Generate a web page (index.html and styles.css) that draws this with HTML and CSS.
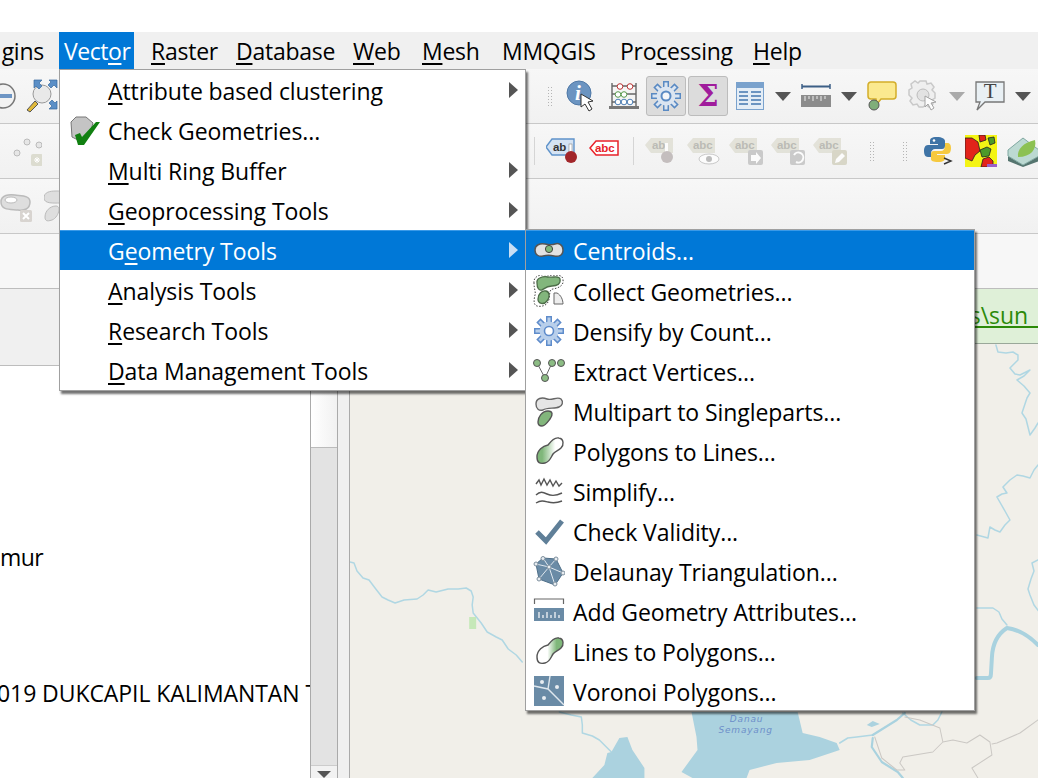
FILE: index.html
```html
<!DOCTYPE html>
<html lang="en">
<head>
<meta charset="utf-8">
<title>QGIS Vector menu</title>
<link rel="stylesheet" href="styles.css">
</head>
<body>
<div class="app">
  <div class="titlegap"></div>
  <nav class="menubar">
    <span class="mb clip">gins</span>
    <span class="mb on">Vect<u>o</u>r</span>
    <span class="mb"><u>R</u>aster</span>
    <span class="mb"><u>D</u>atabase</span>
    <span class="mb"><u>W</u>eb</span>
    <span class="mb"><u>M</u>esh</span>
    <span class="mb">MMQGIS</span>
    <span class="mb">Pro<u>c</u>essing</span>
    <span class="mb"><u>H</u>elp</span>
  </nav>

  <div class="toolbar">
    <div class="tb-left one">
      <span class="slot"><svg width="32" height="32" viewBox="0 0 32 32"><circle cx="19" cy="16" r="12" fill="#f2f2f2" stroke="#777" stroke-width="1.5"/><rect x="10" y="14" width="18" height="4" fill="#6d95c4"/></svg></span>
      <span class="slot"><svg width="34" height="34" viewBox="0 0 34 34"><circle cx="17" cy="15" r="9" fill="#e9e9e9" stroke="#999"/><path d="M9 1h8l-3 3 3 3-3 3-3-3-2 2zM32 1v8l-3-3-3 3-3-3 3-3-2-2zM32 30h-8l3-3-3-3 3-3 3 3 2-2z" fill="#5b8fc7" stroke="#37699f" stroke-width=".7"/><path d="M2 31l8-9 3 3-8 8z" fill="#e0b93a" stroke="#555"/></svg></span>
      <span class="grip g1"></span>
    </div>
    <span class="slot"><svg width="32" height="32" viewBox="0 0 32 32"><circle cx="13" cy="13" r="12" fill="#6b94c1" stroke="#4f78a6"/><text x="9" y="20" class="i-info">i</text><path d="M15 14l0 13 4-3 4 7 3-2-4-7 5-1z" fill="#fff" stroke="#333"/></svg></span>
    <span class="slot"><svg width="30" height="28" viewBox="0 0 30 28"><g fill="none" stroke="#666" stroke-width="1.4"><path d="M3 1v23M27 1v23M3 4h24M3 12h24M3 20h24"/></g><circle cx="11" cy="4.500" r="2.800" fill="#fff" stroke="#b33"/><circle cx="21" cy="4.500" r="2.800" fill="#fff" stroke="#b33"/><circle cx="9" cy="12.500" r="2.800" fill="#fff" stroke="#5a9b4f"/><circle cx="15" cy="12.500" r="2.800" fill="#fff" stroke="#5a9b4f"/><circle cx="9" cy="20" r="2.800" fill="#fff" stroke="#4d7fb5"/><circle cx="15" cy="20" r="2.800" fill="#fff" stroke="#4d7fb5"/><circle cx="21" cy="20" r="2.800" fill="#fff" stroke="#4d7fb5"/><rect x="0" y="24" width="30" height="3" fill="#777"/></svg></span>
    <span class="slot btn"><svg width="32" height="32" viewBox="0 0 32 32"><g stroke="#5a8ac3" stroke-width="6"><path d="M16 1v30M1 16h30M5.400 5.400l21.200 21.200M26.600 5.400L5.400 26.600"/></g><g stroke="#dbe5f1" stroke-width="3"><path d="M16 2.500v27M2.500 16h27M6.500 6.500l19 19M25.500 6.500l-19 19"/></g><circle cx="16" cy="16" r="9.500" fill="#dbe5f1"/><circle cx="16" cy="16" r="4.500" fill="#f4f6f9" stroke="#5a8ac3" stroke-width="2"/></svg></span>
    <span class="slot btn"><svg width="30" height="30" viewBox="0 0 30 30"><text x="15" y="25" class="i-sigma">Σ</text></svg></span>
    <span class="slot"><svg width="28" height="28" viewBox="0 0 28 28"><rect x=".5" y=".5" width="27" height="27" fill="#e4edf6" stroke="#7aa2cd"/><rect x="1" y="1" width="26" height="5" fill="#7aa2cd"/><path d="M3 10h9M15 10h10M3 14h9M15 14h10M3 18h9M15 18h10M3 22h9M15 22h10" stroke="#6b94c1" stroke-width="2"/></svg></span>
    <span class="drop"></span>
    <span class="slot"><svg width="30" height="26" viewBox="0 0 30 26"><path d="M1 1v5M29 1v5" stroke="#3c5f86" stroke-width="1.5"/><rect x="1" y="2.500" width="28" height="2" fill="#3c5f86"/><rect x="0" y="12" width="30" height="12" fill="#8c8c8c"/><path d="M4 13v5M8 13v3M12 13v5M16 13v3M20 13v5M24 13v3" stroke="#eee"/></svg></span>
    <span class="drop"></span>
    <span class="slot"><svg width="30" height="30" viewBox="0 0 30 30"><path d="M4 1h22a3 3 0 0 1 3 3v11a3 3 0 0 1-3 3H14l-4 5-1-5H4a3 3 0 0 1-3-3V4a3 3 0 0 1 3-3z" fill="#fbe98f" stroke="#d3ad2a" stroke-width="1.5"/><circle cx="7" cy="24" r="5" fill="#7fae7a" stroke="#555"/></svg></span>
    <span class="slot faded"><svg width="32" height="32" viewBox="0 0 32 32"><path d="M12 1h6l1 3 4-1 3 4-2 3 3 3v5l-3 2 1 4-4 3-3-2-3 2h-4l-2-3-4 1-3-4 2-3-3-3v-5l3-2-1-4 4-3 3 2z" fill="#eee" stroke="#bbb" stroke-width="1.5"/><circle cx="15" cy="15" r="6" fill="#ddd" stroke="#aaa"/><path d="M17 16v11l3-3 3 6 3-2-3-5 5-1z" fill="#fff" stroke="#888"/></svg></span>
    <span class="drop muted"></span>
    <span class="slot"><svg width="30" height="30" viewBox="0 0 30 30"><path d="M1 1h28v20H10l-8 8 3-8H1z" fill="#e9f0f4" stroke="#777" stroke-width="1.3"/><text x="15" y="17" class="i-t">T</text></svg></span>
    <span class="drop"></span>
  </div>

  <div class="toolbar">
    <div class="tb-left two">
      <span class="slot"><svg width="42" height="30" viewBox="0 0 42 30"><g fill="#e6e6e6" stroke="#bbb"><circle cx="27" cy="6" r="3"/><circle cx="39" cy="9" r="3"/><circle cx="17" cy="17" r="3"/></g><rect x="31" y="18" width="12" height="12" rx="2" fill="#dcdcd0"/><path d="M34 24h6M37 21v6M35 22l4 4M39 22l-4 4" stroke="#fff"/></svg></span>
    </div>
    <span class="sep"></span>
    <span class="slot"><svg width="32" height="26" viewBox="0 0 32 26"><path d="M6 1h22v16H6L0 9z" fill="#d5e3f3" stroke="#5f93ca" stroke-width="1.4"/><text x="7" y="13" class="i-abc dark">ab</text><rect x="23" y="6" width="3" height="9" fill="#fff" stroke="#888" stroke-width=".6"/><circle cx="25" cy="19" r="6" fill="#a2262a"/></svg></span>
    <span class="slot"><svg class="raised" width="30" height="16" viewBox="0 0 30 16"><path d="M7 1h22v14H7L1 8z" fill="#fff" stroke="#e8222a" stroke-width="1.5"/><text x="6" y="12" class="i-abc red">abc</text></svg></span>
    <span class="sep narrow"></span>
    <span class="slot faded lbl"><svg width="34" height="28" viewBox="0 0 34 28"><path d="M6 1h22v15H6L0 8z" fill="#dddcd0"/><text x="7" y="12" class="i-abc grey">ab</text><rect x="20" y="6" width="3" height="10" fill="#fff"/><circle cx="22" cy="20" r="6" fill="#b5adad"/></svg></span>
    <span class="slot faded lbl"><svg width="34" height="28" viewBox="0 0 34 28"><path d="M6 1h22v15H6L0 8z" fill="#dddcd0"/><text x="6" y="12" class="i-abc grey">abc</text><ellipse cx="22" cy="22" rx="10" ry="5" fill="#fff" stroke="#bbb"/><circle cx="22" cy="22" r="3" fill="#aaa"/></svg></span>
    <span class="slot faded lbl"><svg width="34" height="28" viewBox="0 0 34 28"><path d="M6 1h22v15H6L0 8z" fill="#dddcd0"/><text x="6" y="12" class="i-abc grey">abc</text><rect x="19" y="13" width="15" height="15" rx="2" fill="#bdbdbd"/><path d="M22 18h5v-3l5 6-5 6v-3h-5z" fill="#fff"/></svg></span>
    <span class="slot faded lbl"><svg width="34" height="28" viewBox="0 0 34 28"><path d="M6 1h22v15H6L0 8z" fill="#dddcd0"/><text x="6" y="12" class="i-abc grey">abc</text><rect x="19" y="13" width="15" height="15" rx="2" fill="#bdbdbd"/><path d="M23 18a5 5 0 1 1 2 7" fill="none" stroke="#fff" stroke-width="2"/></svg></span>
    <span class="slot faded lbl"><svg width="34" height="28" viewBox="0 0 34 28"><path d="M6 1h22v15H6L0 8z" fill="#dddcd0"/><text x="6" y="12" class="i-abc grey">abc</text><rect x="19" y="13" width="15" height="15" rx="2" fill="#cfcdb9"/><path d="M22 26l1-4 6-6 3 3-6 6z" fill="#fff"/></svg></span>
    <span class="grip first"></span>
    <span class="grip last"></span>
    <span class="slot"><svg width="30" height="30" viewBox="0 0 30 30"><path d="M13 1c-6 0-7 2-7 4v3h8v1H4c-3 0-4 3-4 6s1 6 4 6h3v-4c0-2 2-4 4-4h7c2 0 3-1 3-3V5c0-2-3-4-8-4z" fill="#3f74a6"/><path d="M14 26c6 0 7-2 7-4v-3h-8v-1h10c3 0 4-3 4-6s-1-5-4-5h-2v3c0 3-2 5-4 5H10c-2 0-3 1-3 3v5c0 2 2 3 7 3z" fill="#f6c93f"/><circle cx="10" cy="4.500" r="1.300" fill="#fff"/><path d="M20 22l7 3-7 3" fill="none" stroke="#333" stroke-width="1.4"/></svg></span>
    <span class="slot"><svg width="32" height="32" viewBox="0 0 32 32"><rect width="32" height="32" fill="#f4f414"/><path d="M0 3h7l6 4 2 9-5 4-3 6-7-3zM14 0h6l1 5-6 2zM18 24l6-2 4 4v6H16z" fill="#e2231a" stroke="#222" stroke-width=".8"/><path d="M15 15l7-3 4 2-2 7-7 1zM23 3l6-1 1 6-5 2z" fill="#4c9a2a" stroke="#222" stroke-width=".8"/><path d="M22 29h10v3H22z" fill="#9a5fc7"/></svg></span>
    <span class="slot"><svg width="32" height="32" viewBox="0 0 32 32"><path d="M1 21l15 9 16-9v5l-16 6-15-6z" fill="#55756f"/><path d="M1 15l15-12 16 12v6l-16 9-15-9z" fill="#bcd9d2" stroke="#7fa7a0"/><path d="M11 22c-1-8 5-14 17-17 2 9-4 17-17 17z" fill="#8cc152"/></svg></span>
  </div>

  <div class="toolbar third">
    <span class="slot"><svg width="32" height="32" viewBox="0 0 32 32"><path d="M1 12c0-7 8-8 14-7s15 0 15 7-6 9-12 8-17 1-17-8z" fill="#dedede" stroke="#bbb" stroke-width="1.5"/><ellipse cx="11" cy="10" rx="6" ry="3" fill="#fff" stroke="#bbb"/><rect x="20" y="20" width="12" height="12" rx="1.500" fill="#d8d4d0"/><path d="M23 23l6 6M29 23l-6 6" stroke="#fff" stroke-width="2"/></svg></span>
    <span class="slot"><svg width="32" height="32" viewBox="0 0 32 32"><path d="M0 8c0-6 6-7 12-7s16 0 16 6-6 6-12 6S0 14 0 8zM1 27c0-6 5-11 11-11s2 12-4 14-7 0-7-3z" fill="#dedede" stroke="#bbb"/></svg></span>
  </div>
  <div class="toolbar fourth"></div>

  <div class="work">
    <aside class="panel">
      <div class="panel-head"></div>
      <div class="panel-body">
        <div class="tree">
          <div class="row first-row">mur</div>
          <div class="row second-row">019 DUKCAPIL KALIMANTAN T</div>
        </div>
        <div class="scrollbar">
          <div class="thumb"></div>
          <div class="track"></div>
          <div class="scroll-btn"><span class="down"></span></div>
        </div>
      </div>
    </aside>
    <div class="splitter"></div>
    <section class="mapcol">
      <div class="msgbar"><span class="msg">rs\sun_</span></div>
      <svg class="map" viewBox="351 344 687 434" preserveAspectRatio="none">
        <g class="r1">
          <path d="M351 562l4 1 3 8 6 7 6 2 6 8 7 9 6 3 7 3 9-3 13-1 6-4 5-5 8 2 12-3 10 0 8-1 5 3 2 6-1 8 1 8 8 10 6 9 9 5 6 3 6 9 8 6 6 7"/>
          <path d="M996 345l2 7 8 1 7-1 5 3 0 5-8 8 5 6 5 1 10-5-6 6-7 4 7 6 6 7-3 5-2 6-3 9 4 6 2 8 2 8 5-7 3-5"/>
          <path d="M977 535l11 3 2-11 5 3 5 2 5-7 5-5-5-9-8-14 5-3 5-1-4-6 7-7 7-5 6 1 7 2 4-8 4-5"/>
          <path d="M1038 560l-6 3 2 8-3 8-3 10 2 6 4 10 6 8"/>
          <path d="M977 608h16l6 4 3 7 5 6"/>
          <path d="M560 712l12 3 10 2 1 8 0 8 10 3 7 4 6 6 6 6"/>
          <path d="M840 743l8-5 9-1 16-2"/>
          <path d="M903 713l8 7 9 5h13l5-5 4-8"/>
        </g>
        <path class="r3" d="M977 678h11q3 0 3-4l1-17q1-20 15-29 16 2 31 17"/>
        <path class="r2" d="M873 735l24-15 8-7M873 738l-1 9 10 15 16 10 5 6"/>
        <g class="lake">
          <path d="M692 712l5 25 1 13-16 22 11 6h54l3-8 27-7 33-3 30-10-3-7-17-6-17-4-5-21z"/>
          <path d="M612 752l8-14 8-1 5 13 12 18v10h-52l12-13 3-12z"/>
          <path d="M867 725l6-4 7 3-8 3z"/>
        </g>
        <path class="road" d="M875 737l7 21 15 12h8l-5-7 3-6 30-5 10-10-3-14-20-8-15-3M943 742l10-2 14 3 13-8 10 7 2 13-20 13 6 10M992 744l5-1 23-10 18-13"/>
        <rect class="park" x="470" y="617" width="7" height="12"/>
        <text x="747" y="722" class="lake-label">Danau</text>
        <text x="746" y="733" class="lake-label">Semayang</text>
      </svg>
    </section>
  </div>
</div>

<div class="menu main">
  <div class="mi"><span class="mi-ic"></span><span class="mi-t"><u>A</u>ttribute based clustering</span><span class="sub-arrow"></span></div>
  <div class="mi"><span class="mi-ic"><svg width="32" height="32" viewBox="0 0 32 32"><path d="M3 8l5-5 10 0 7 6-3 10-10 8-8-4z" fill="#c4c4c4" stroke="#777"/><path d="M7 21l5-2 2 4 14-15 4 0-16 23h-6z" fill="#118011"/></svg></span><span class="mi-t">Check Geometries...</span></div>
  <div class="mi"><span class="mi-ic"></span><span class="mi-t"><u>M</u>ulti Ring Buffer</span><span class="sub-arrow"></span></div>
  <div class="mi"><span class="mi-ic"></span><span class="mi-t"><u>G</u>eoprocessing Tools</span><span class="sub-arrow"></span></div>
  <div class="mi active"><span class="mi-ic"></span><span class="mi-t">G<u>e</u>ometry Tools</span><span class="sub-arrow"></span></div>
  <div class="mi"><span class="mi-ic"></span><span class="mi-t"><u>A</u>nalysis Tools</span><span class="sub-arrow"></span></div>
  <div class="mi"><span class="mi-ic"></span><span class="mi-t"><u>R</u>esearch Tools</span><span class="sub-arrow"></span></div>
  <div class="mi"><span class="mi-ic"></span><span class="mi-t"><u>D</u>ata Management Tools</span><span class="sub-arrow"></span></div>
</div>

<div class="menu submenu">
  <div class="mi active"><span class="mi-ic"><svg width="32" height="32" viewBox="0 0 32 32"><path d="M2 16c0-5 5-7 10-6s7 1 10 0 8 0 8 6-5 7-9 6-7-1-11 0-8-1-8-6z" fill="#e2e2e2" stroke="#555" stroke-width="1.5"/><circle cx="16" cy="15" r="3.600" fill="#7fb77a" stroke="#444"/></svg></span><span class="mi-t">Centroids...</span></div>
  <div class="mi"><span class="mi-ic"><svg width="32" height="32" viewBox="0 0 32 32"><path d="M1 8C0 0 10-1 15 0s15-2 15 5c1 6-5 8-10 9-4 0-3 6-4 10-1 7-8 8-12 7-4-1-3-7-2-11 1-3-1-6-1-12z" fill="none" stroke="#444" stroke-dasharray="1.500 1.500"/><path d="M4 8c-1-5 6-7 11-6s11-2 12 2c1 5-3 7-8 7s-7 2-10 4c-3 1-5-2-5-7z" fill="#82b67c" stroke="#4d6d48" stroke-width="1.300"/><path d="M5 24c0-5 4-9 8-8s4 6 1 10-9 3-9-2z" fill="#82b67c" stroke="#4d6d48" stroke-width="1.300"/><path d="M21 18h3c4 2 6 7 6 11h-9z" fill="#eee" stroke="#666"/></svg></span><span class="mi-t">Collect Geometries...</span></div>
  <div class="mi"><span class="mi-ic"><svg width="32" height="32" viewBox="0 0 32 32"><g stroke="#5f8ccb" stroke-width="6"><path d="M16 1v30M1 16h30M5.400 5.400l21.200 21.200M26.600 5.400L5.400 26.600"/></g><g stroke="#b8cfeb" stroke-width="3"><path d="M16 2.500v27M2.500 16h27M6.500 6.500l19 19M25.500 6.500l-19 19"/></g><circle cx="16" cy="16" r="9.500" fill="#b8cfeb"/><circle cx="16" cy="16" r="4.500" fill="#fff" stroke="#5f8ccb" stroke-width="1.600"/></svg></span><span class="mi-t">Densify by Count...</span></div>
  <div class="mi"><span class="mi-ic"><svg width="32" height="32" viewBox="0 0 32 32"><path d="M4 8l8 15 7-15" fill="none" stroke="#666"/><g fill="#8cbc84" stroke="#555"><circle cx="4" cy="8" r="3.500"/><circle cx="19" cy="8" r="3.500"/><circle cx="28" cy="8" r="3.500"/><circle cx="12" cy="23" r="3.500"/></g></svg></span><span class="mi-t">Extract Vertices...</span></div>
  <div class="mi"><span class="mi-ic"><svg width="32" height="32" viewBox="0 0 32 32"><path d="M3 9c0-6 6-7 11-5s10-3 14 0c3 3 1 7-2 8-4 2-12 0-16 3-4 1-7-1-7-6z" fill="#e5e5e5" stroke="#666" stroke-width="1.400"/><path d="M5 27c0-5 4-11 10-11 5 0 5 4 2 8s-5 7-8 7-4-1-4-4z" fill="#82b67c" stroke="#555" stroke-width="1.400"/></svg></span><span class="mi-t">Multipart to Singleparts...</span></div>
  <div class="mi"><span class="mi-ic"><svg width="32" height="32" viewBox="0 0 32 32"><defs><linearGradient id="gp" x1="0" x2="1"><stop offset=".2" stop-color="#7fb77a"/><stop offset=".7" stop-color="#fff"/></linearGradient></defs><path d="M4 22c0-7 6-11 11-12 3-4 7-8 11-7 5 1 5 7 2 10s-6 3-8 6-3 8-8 9-8 0-8-6z" fill="url(#gp)" stroke="#555" stroke-width="1.400"/></svg></span><span class="mi-t">Polygons to Lines...</span></div>
  <div class="mi"><span class="mi-ic"><svg width="32" height="32" viewBox="0 0 32 32"><g fill="none" stroke="#555" stroke-width="1.400"><path d="M3 9l3-4 2 5 3-6 3 6 3-5 3 6 3-5 3 5 3-3"/><path d="M3 20c4-4 7-3 11-1s9 2 15-1"/><path d="M3 28c5-3 8-2 12-1s9 1 14-1"/></g></svg></span><span class="mi-t">Simplify...</span></div>
  <div class="mi"><span class="mi-ic"><svg width="32" height="32" viewBox="0 0 32 32"><path d="M4 17l9 9L29 6" fill="none" stroke="#5f7f98" stroke-width="5"/></svg></span><span class="mi-t">Check Validity...</span></div>
  <div class="mi"><span class="mi-ic"><svg width="32" height="32" viewBox="0 0 32 32"><path d="M10 3l13 1 7 14-8 12-16-6L3 9z" fill="#6a8ba6" stroke="#4f6f89"/><path d="M16 12L10 3M16 12l7-8M16 12L3 9M16 12l14 6M16 12l6 18M16 12L6 24" stroke="#dfe7ee"/><g fill="#e8edf1" stroke="#7d8f9d"><circle cx="10" cy="3.500" r="2"/><circle cx="23" cy="4" r="2"/><circle cx="30" cy="18" r="2"/><circle cx="22" cy="29" r="2"/><circle cx="6" cy="24" r="2"/><circle cx="3" cy="9" r="2"/><circle cx="16" cy="12" r="2"/></g></svg></span><span class="mi-t">Delaunay Triangulation...</span></div>
  <div class="mi"><span class="mi-ic"><svg width="32" height="32" viewBox="0 0 32 32"><path d="M1.500 9V4h29v5" fill="none" stroke="#666" stroke-width="1.200"/><rect x="1" y="13" width="30" height="13" fill="#6a8ba6"/><path d="M6 17v6M10 20v3M14 17v6M18 20v3M22 17v6M26 20v3" stroke="#e8edf1" stroke-width="1.400"/></svg></span><span class="mi-t">Add Geometry Attributes...</span></div>
  <div class="mi"><span class="mi-ic"><svg width="32" height="32" viewBox="0 0 32 32"><defs><linearGradient id="gl" x1="0" x2="1"><stop offset=".4" stop-color="#fff"/><stop offset=".75" stop-color="#7fb77a"/></linearGradient></defs><path d="M4 22c0-7 6-11 11-12 3-4 7-8 11-7 5 1 5 7 2 10s-6 3-8 6-3 8-8 9-8 0-8-6z" fill="url(#gl)" stroke="#555" stroke-width="1.400"/></svg></span><span class="mi-t">Lines to Polygons...</span></div>
  <div class="mi"><span class="mi-ic"><svg width="32" height="32" viewBox="0 0 32 32"><rect x="1" y="1" width="30" height="30" fill="#6a8ba6"/><path d="M1 11l14 3 16 16M15 14l2-13" fill="none" stroke="#dfe7ee" stroke-width="1.400"/><g fill="#e8edf1"><circle cx="9" cy="7" r="2"/><circle cx="24" cy="12" r="2"/><circle cx="11" cy="23" r="2"/></g></svg></span><span class="mi-t">Voronoi Polygons...</span></div>
</div>
</body>
</html>
```
FILE: styles.css
```css
* { box-sizing: border-box; }
html, body { margin: 0; padding: 0; height: 100%; overflow: hidden; background: #fff; }
body { font-family: "Open Sans", "Noto Sans", sans-serif; font-size: 23px; letter-spacing: -.08px; color: #000; }
u { text-decoration-thickness: 1.5px; text-underline-offset: 3px; }
svg { display: block; flex: none; }

.app { display: flex; flex-direction: column; height: 778px; width: 1038px; overflow: hidden; }
.titlegap { height: 32px; flex: none; background: #fff; }

.menubar { height: 37px; flex: none; background: #f0f0f0; display: grid; grid-template-columns: 59px 92px 85px 117px 69px 80px 118px 133px auto; letter-spacing: -.25px; }
.mb { display: flex; align-items: center; white-space: pre; }
.mb.clip { padding-right: 15px; justify-content: flex-end; overflow: hidden; }
.mb.on { background: #0078d7; color: #fff; padding: 0 5px; width: 75px; letter-spacing: -.45px; }

.toolbar { height: 55px; flex: none; display: flex; align-items: center; overflow: hidden; background: linear-gradient(#f7f7f7, #f1f1f1); border-bottom: 1px solid #c8c8c8; }
.tb-left { flex: none; display: flex; align-items: center; }
.tb-left.one { margin-left: -21px; }
.tb-left.two { width: 534px; }
.slot { flex: none; width: 42px; height: 40px; display: flex; align-items: center; justify-content: center; }
.slot.btn { background: #dcdcdc; border: 1px solid #bcbcbc; border-radius: 3px; width: 40px; margin: 0 1px; }
.slot.faded { opacity: .75; }
.slot.lbl { justify-content: flex-start; padding-left: 6px; }
.raised { margin-bottom: 6px; }
.drop { flex: none; width: 24px; height: 10px; }
.drop::after { content: ""; display: block; margin: 1px auto 0; width: 0; height: 0; border-left: 8px solid transparent; border-right: 8px solid transparent; border-top: 9px solid #555; }
.drop.muted::after { border-top-color: #aaa; }
.sep { flex: none; width: 1px; height: 28px; background: #d5d5d5; margin-right: 6px; }
.sep.narrow { margin: 0 5px 0 8px; }
.grip { flex: none; width: 6px; height: 20px; background-image: radial-gradient(circle, #b5b5b5 40%, transparent 45%); background-size: 3px 3px; }
.grip.g1 { margin-left: 484px; margin-right: 8px; }
.grip.first { margin-left: 20px; }
.grip.last { margin-left: 27px; margin-right: 10px; }
.third .slot { justify-content: flex-start; }
.third .slot:first-child { width: 44px; }
.fourth { background: #f7f7f7; border-bottom: 1px solid #bdbdbd; }

.work { flex: 1; min-height: 0; display: flex; }
.panel { width: 338px; flex: none; display: flex; flex-direction: column; }
.panel-head { height: 77px; flex: none; background: #f0f0f0; border-bottom: 1px solid #bdbdbd; }
.panel-body { flex: 1; min-height: 0; display: flex; }
.tree { flex: 1; min-width: 0; overflow: hidden; background: #fff; }
.row { height: 32px; line-height: 32px; white-space: nowrap; }
.first-row { margin-top: 175px; letter-spacing: -.6px; }
.second-row { margin-top: 104px; margin-left: -3px; }
.scrollbar { width: 28px; flex: none; display: flex; flex-direction: column; background: #e3e3e3; border-left: 1px solid #aaa; border-right: 1px solid #aaa; }
.thumb { height: 82px; flex: none; background: linear-gradient(90deg, #fff, #f1f1f1); border-bottom: 1px solid #bbb; }
.track { flex: 1; }
.scroll-btn { height: 13px; flex: none; background: #f2f2f2; border-top: 1px solid #ccc; display: flex; justify-content: center; align-items: flex-end; }
.down { width: 0; height: 0; border-left: 7px solid transparent; border-right: 7px solid transparent; border-top: 7px solid #555; }
.splitter { width: 12px; flex: none; background: #f0f0f0; border-right: 1px solid #aaa; }
.mapcol { flex: 1; min-width: 0; display: flex; flex-direction: column; }
.msgbar { height: 55px; flex: none; background: #dff0d8; border-bottom: 1px solid #9aa89a; display: flex; justify-content: flex-end; align-items: center; overflow: hidden; padding-bottom: 2px; }
.msg { color: #2b8a08; text-decoration: underline; white-space: nowrap; }
.map { flex: 1; min-height: 0; width: 100%; background: #f1efe9; }
.map path { fill: none; stroke-linejoin: round; stroke-linecap: round; }
.r1 path { stroke: #b0d7e3; stroke-width: 1.5; }
.r2 { stroke: #a9d2df; stroke-width: 2.2; }
.r3 { stroke: #a9d2df; stroke-width: 4; }
.map .lake path { fill: #abd2df; }
.road { stroke: #cbc8c4; stroke-width: 1; }
.park { fill: #c6e8b8; }
.lake-label { font-family: "DejaVu Sans", sans-serif; font-size: 9px; font-style: italic; text-anchor: middle; fill: #6d8fc9; letter-spacing: .8px; }

.menu { position: absolute; background: #fff; border: 1px solid #a0a0a0; box-shadow: 2px 3px 2px rgba(0,0,0,.55); }
.menu.main { left: 59px; top: 69px; width: 467px; }
.menu.submenu { left: 525px; top: 229px; width: 450px; height: 482px; padding-top: .4px; }
.mi { height: 40px; display: flex; align-items: center; white-space: pre; position: relative; }
.mi-t { padding-top: 2px; }
.submenu .mi { height: 40.1px; }
.submenu .mi-ic { width: 47px; padding-left: 7px; }
.mi.active { background: #0078d7; color: #fff; box-shadow: inset 0 1px 0 #3a9ae8; }
.mi-ic { width: 48px; flex: none; display: flex; align-items: center; padding-left: 8px; }
.sub-arrow { position: absolute; left: 449px; top: 50%; margin-top: -8px; width: 0; height: 0; border-top: 8px solid transparent; border-bottom: 8px solid transparent; border-left: 9px solid #555; }
.mi.active .sub-arrow { border-left-color: #c8dff4; }

.i-info { font-family: "Liberation Serif", serif; font-weight: bold; font-style: italic; font-size: 21px; fill: #fff; }
.i-sigma { font-family: "DejaVu Serif", serif; font-weight: bold; font-size: 30px; fill: #a01c9c; text-anchor: middle; }
.i-t { font-family: "Liberation Serif", serif; font-size: 21px; fill: #444; text-anchor: middle; }
.i-abc { font-family: "Liberation Sans", sans-serif; font-weight: bold; font-size: 11.5px; }
.dark { fill: #333; }
.red { fill: #e8222a; }
.grey { fill: #a8a8a0; }
```
